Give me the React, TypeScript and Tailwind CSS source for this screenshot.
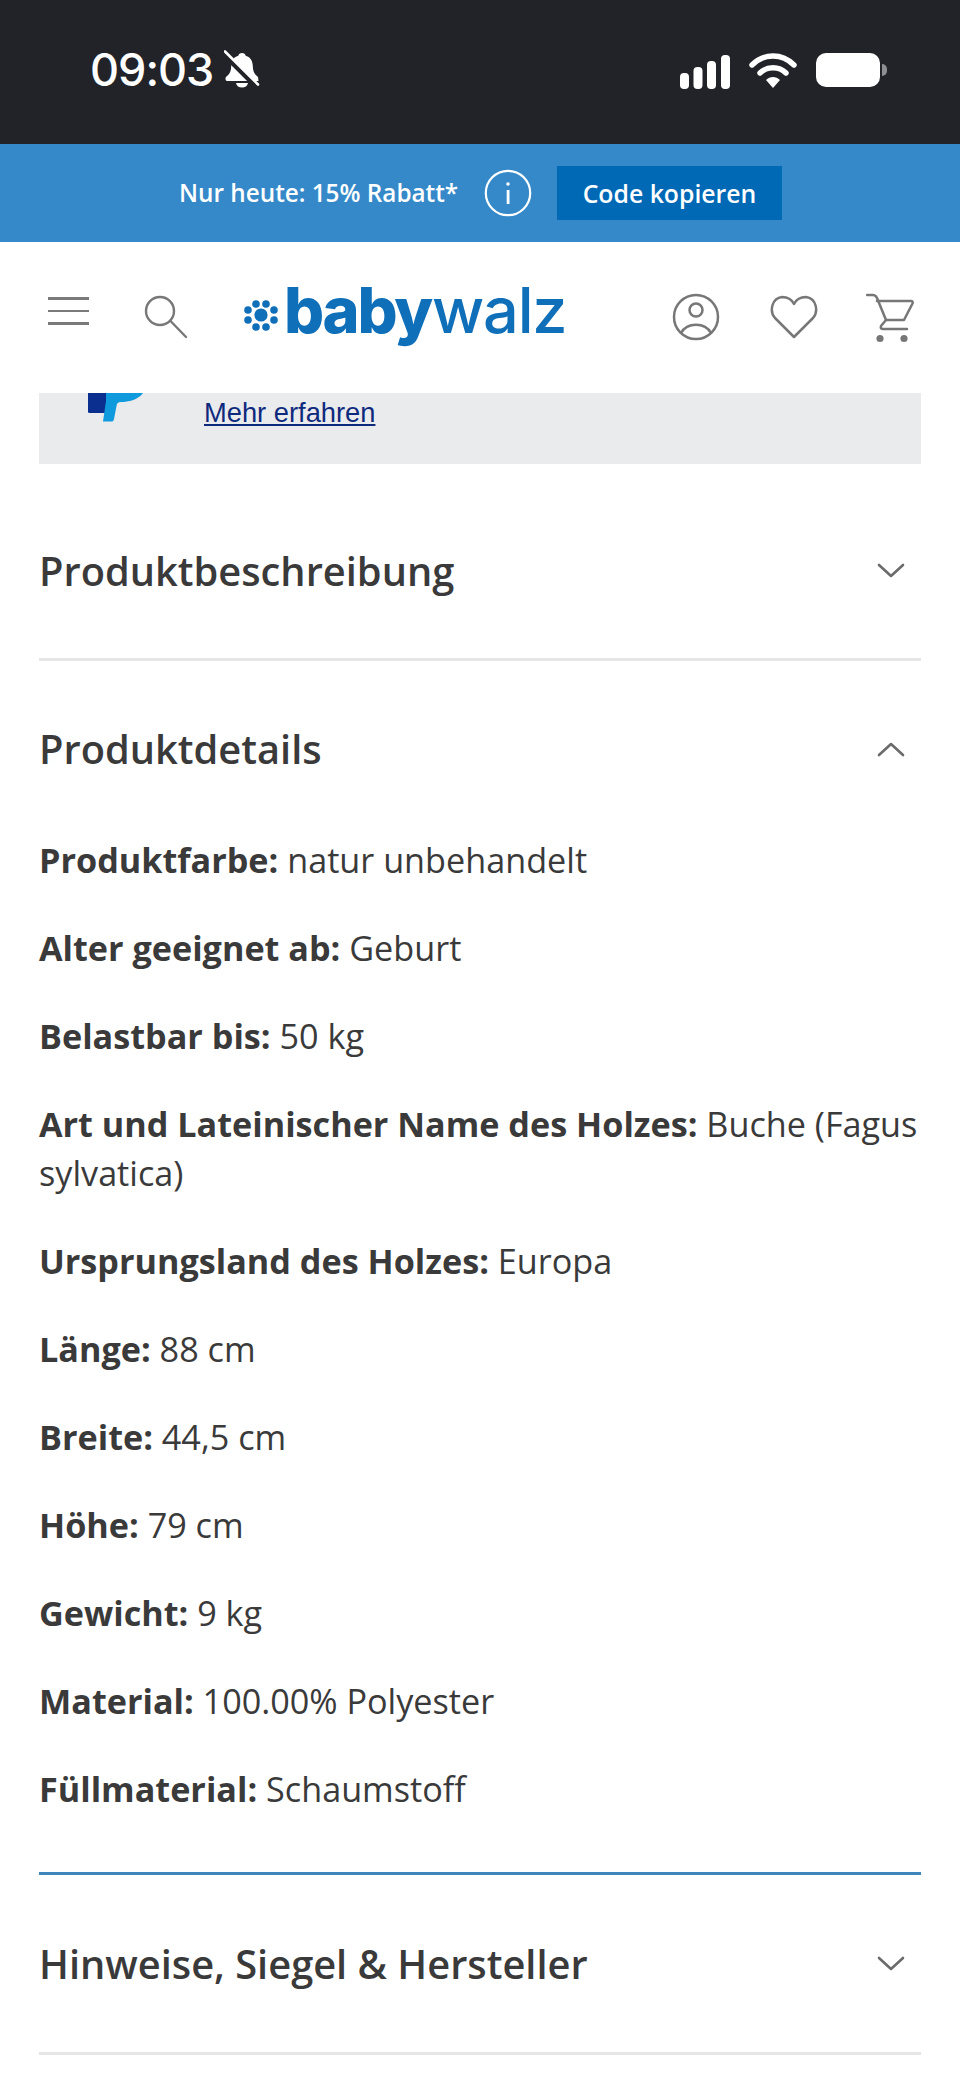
import React from "react";

const details: [string, string][] = [
  ["Produktfarbe:", "natur unbehandelt"],
  ["Alter geeignet ab:", "Geburt"],
  ["Belastbar bis:", "50 kg"],
  ["Art und Lateinischer Name des Holzes:", "Buche (Fagus sylvatica)"],
  ["Ursprungsland des Holzes:", "Europa"],
  ["Länge:", "88 cm"],
  ["Breite:", "44,5 cm"],
  ["Höhe:", "79 cm"],
  ["Gewicht:", "9 kg"],
  ["Material:", "100.00% Polyester"],
  ["Füllmaterial:", "Schaumstoff"],
];

function Chevron({ up = false }: { up?: boolean }) {
  return (
    <svg width="28" height="16" viewBox="0 0 28 16" className="shrink-0 mr-[16px]" fill="none">
      <path d={up ? "M2 14 L14 3 L26 14" : "M2 2 L14 13 L26 2"} stroke="#6b6b6b" strokeWidth="2.6" strokeLinecap="round" strokeLinejoin="round" />
    </svg>
  );
}

function Flower() {
  const dots = [[-5, -11], [5, -11], [13, -5], [13, 5], [5, 12], [-5, 12], [-13, 5], [-13, -5]];
  return (
    <svg width="38" height="36" viewBox="-19 -18 38 36" className="shrink-0" fill="#0f6fb8">
      <circle cx="0" cy="0" r="6.6" />
      {dots.map(([x, y], i) => (
        <circle key={i} cx={x} cy={y} r="3.8" />
      ))}
    </svg>
  );
}

export default function App() {
  return (
    <div className="w-[960px] h-[2081px] overflow-hidden bg-white text-[#3a3a3a] font-['Open_Sans',sans-serif]">
      {/* status bar */}
      <div className="h-[144px] bg-[#222329] flex items-start text-white">
        <span className="ml-[90px] mt-[42px] w-[122px] text-[45px] leading-[55px] font-medium tracking-[-1px] font-['Inter',sans-serif]">09:03</span>
        <svg width="36" height="38" viewBox="0 0 36 38" className="ml-[12px] mt-[50px]" fill="none">
          <path d="M18 3 C20 3 21.5 4.2 21.7 5.8 C27 7.2 28.5 11.5 28.8 16 C29 21 30 24 34 27 L34.5 31 L3 31 C1.5 31 1 28.5 2 27 C6 24 7 21 7.2 16 C7.4 11.5 9 7.2 14.3 5.8 C14.5 4.2 16 3 18 3 Z" fill="#fff" />
          <path d="M12 33 H24 C23.5 36 21 37.5 18 37.5 C15 37.5 12.5 36 12 33 Z" fill="#fff" />
          <path d="M0 4 L33 37" stroke="#222329" strokeWidth="5.5" />
          <path d="M1 1.5 L34 34.5" stroke="#fff" strokeWidth="2.6" strokeLinecap="round" />
        </svg>
        <svg width="50" height="34" viewBox="0 0 50 34" className="ml-[420px] mt-[55px]" fill="#fff">
          <rect x="0" y="18" width="9" height="16" rx="4" />
          <rect x="13.5" y="12" width="9" height="22" rx="4" />
          <rect x="27" y="6" width="9" height="28" rx="4" />
          <rect x="41" y="0" width="9" height="34" rx="4" />
        </svg>
        <svg width="48" height="36" viewBox="0 0 48 36" className="ml-[19px] mt-[53px]" fill="none">
          <path d="M3 12 C15 0 33 0 45 12" stroke="#fff" strokeWidth="5.4" strokeLinecap="round" />
          <path d="M11 20 C18 13 30 13 37 20" stroke="#fff" strokeWidth="5.4" strokeLinecap="round" />
          <path d="M17 27 C21 23 27 23 31 27 L24 35 Z" fill="#fff" />
        </svg>
        <div className="ml-[19px] mt-[53px] w-[64px] h-[34px] rounded-[10px] bg-white" />
        <div className="ml-[2px] mt-[64px] w-[5px] h-[12px] rounded-r-full bg-[#8e8f93]" />
      </div>

      {/* promo */}
      <div className="h-[98px] bg-[#3589c9] flex items-center text-white">
        <span className="ml-[179px] w-[280px] whitespace-nowrap text-[24.3px] leading-[36px] font-semibold">Nur heute: 15% Rabatt*</span>
        <svg width="48" height="48" viewBox="0 0 48 48" className="ml-[25px]" fill="none">
          <circle cx="24" cy="24" r="22.2" stroke="#fff" strokeWidth="2.2" />
          <rect x="22.7" y="21" width="2.8" height="14" fill="#fff" />
          <circle cx="24" cy="15" r="1.8" fill="#fff" />
        </svg>
        <button className="ml-[25px] w-[225px] h-[54px] bg-[#0069b6] text-[24.8px] leading-[36px] font-semibold">Code kopieren</button>
      </div>

      {/* header */}
      <div className="h-[151px] bg-white flex items-start">
        <div className="ml-[48px] mt-[55px] w-[41px] flex flex-col gap-[10px]">
          <div className="h-[2.5px] bg-[#7a7a7a]" />
          <div className="h-[2.5px] bg-[#7a7a7a]" />
          <div className="h-[2.5px] bg-[#7a7a7a]" />
        </div>
        <svg width="44" height="44" viewBox="0 0 44 44" className="ml-[55px] mt-[53px]" fill="none" stroke="#777" strokeWidth="2.4" strokeLinecap="round">
          <circle cx="16" cy="16" r="14" />
          <path d="M26.5 26 L42 42" />
        </svg>
        <div className="ml-[54px] mt-[55px]"><Flower /></div>
        <div className="ml-[4px] mt-[26px] w-[283px] whitespace-nowrap text-[#0f6fb8] text-[63px] leading-[84px] font-['Inter',sans-serif] flex">
          <span className="font-extrabold tracking-[-2.2px]">baby</span>
          <span className="font-medium tracking-[-1.2px] ml-[1px]">walz</span>
        </div>
        <svg width="48" height="48" viewBox="0 0 48 48" className="ml-[105px] mt-[51px]" fill="none" stroke="#777" strokeWidth="2.5">
          <circle cx="24" cy="24" r="22" />
          <circle cx="24" cy="17" r="6.5" />
          <path d="M9 40 C15 29 33 29 39 40" />
        </svg>
        <svg width="48" height="44" viewBox="0 0 48 44" className="ml-[50px] mt-[53px]" fill="none" stroke="#777" strokeWidth="2.5" strokeLinejoin="round">
          <path d="M24 42 L5 23 C-1 16 2 3 12 2 C18 2 22 5 24 9 C26 5 30 2 36 2 C46 3 49 16 43 23 Z" />
        </svg>
        <svg width="48" height="50" viewBox="0 0 48 50" className="ml-[48px] mt-[51px]" fill="none" stroke="#777" strokeWidth="2.5" strokeLinecap="round" strokeLinejoin="round">
          <path d="M1 2 H7 C9 2 10 3 11 5 L20 27 L15 33 C14.5 35 15 36 17 36 H41" />
          <path d="M11 8 H45 C46.5 8 47 9 46.5 10.5 L38 27 H20" />
          <circle cx="14" cy="45.5" r="3.6" fill="#777" stroke="none" />
          <circle cx="38" cy="45.5" r="3.6" fill="#777" stroke="none" />
        </svg>
      </div>

      <div className="mx-[39px]">
        {/* paypal strip */}
        <div className="h-[71px] bg-[#e9ebed] flex items-start overflow-hidden">
          <svg width="56" height="30" viewBox="0 0 56 30" className="ml-[49px] shrink-0">
            <path d="M0 0 H20 L18 20 H1.5 C0 20 -0.5 19 0 17 Z" fill="#0a2f8f" />
            <path d="M18 0 H55 C50 7 40 9 33 9 C30 9 29 10 28.5 13 L26 26 C25.5 28 25 28.5 23 28.5 H15 L18 8 Z" fill="#0f9ade" />
          </svg>
          <a className="ml-[60px] mt-[1px] text-[27.3px] leading-[37px] text-[#0e2a7d] underline font-['Liberation_Sans',sans-serif]">Mehr erfahren</a>
        </div>

        {/* Produktbeschreibung */}
        <div className="h-[197px] pt-[19px] flex items-center justify-between border-b-[3px] border-[#e6e6e6]">
          <h2 className="text-[39.8px] leading-[54px] font-semibold">Produktbeschreibung</h2>
          <Chevron />
        </div>

        {/* Produktdetails */}
        <div className="border-b-[3px] border-[#3f86bd] pb-[59px]">
          <div className="h-[174px] pt-[1px] flex items-center justify-between">
            <h2 className="text-[39.8px] leading-[54px] font-semibold">Produktdetails</h2>
            <Chevron up />
          </div>
          <div className="flex flex-col gap-[39px]">
            {details.map(([k, v]) => (
              <p key={k} className="text-[34.2px] leading-[49px]">
                <strong className="font-bold">{k}</strong> {v}
              </p>
            ))}
          </div>
        </div>

        {/* Hinweise */}
        <div className="h-[180px] flex items-center justify-between border-b-[3px] border-[#e6e6e6]">
          <h2 className="text-[39.8px] leading-[54px] font-semibold">Hinweise, Siegel &amp; Hersteller</h2>
          <Chevron />
        </div>
      </div>
    </div>
  );
}
